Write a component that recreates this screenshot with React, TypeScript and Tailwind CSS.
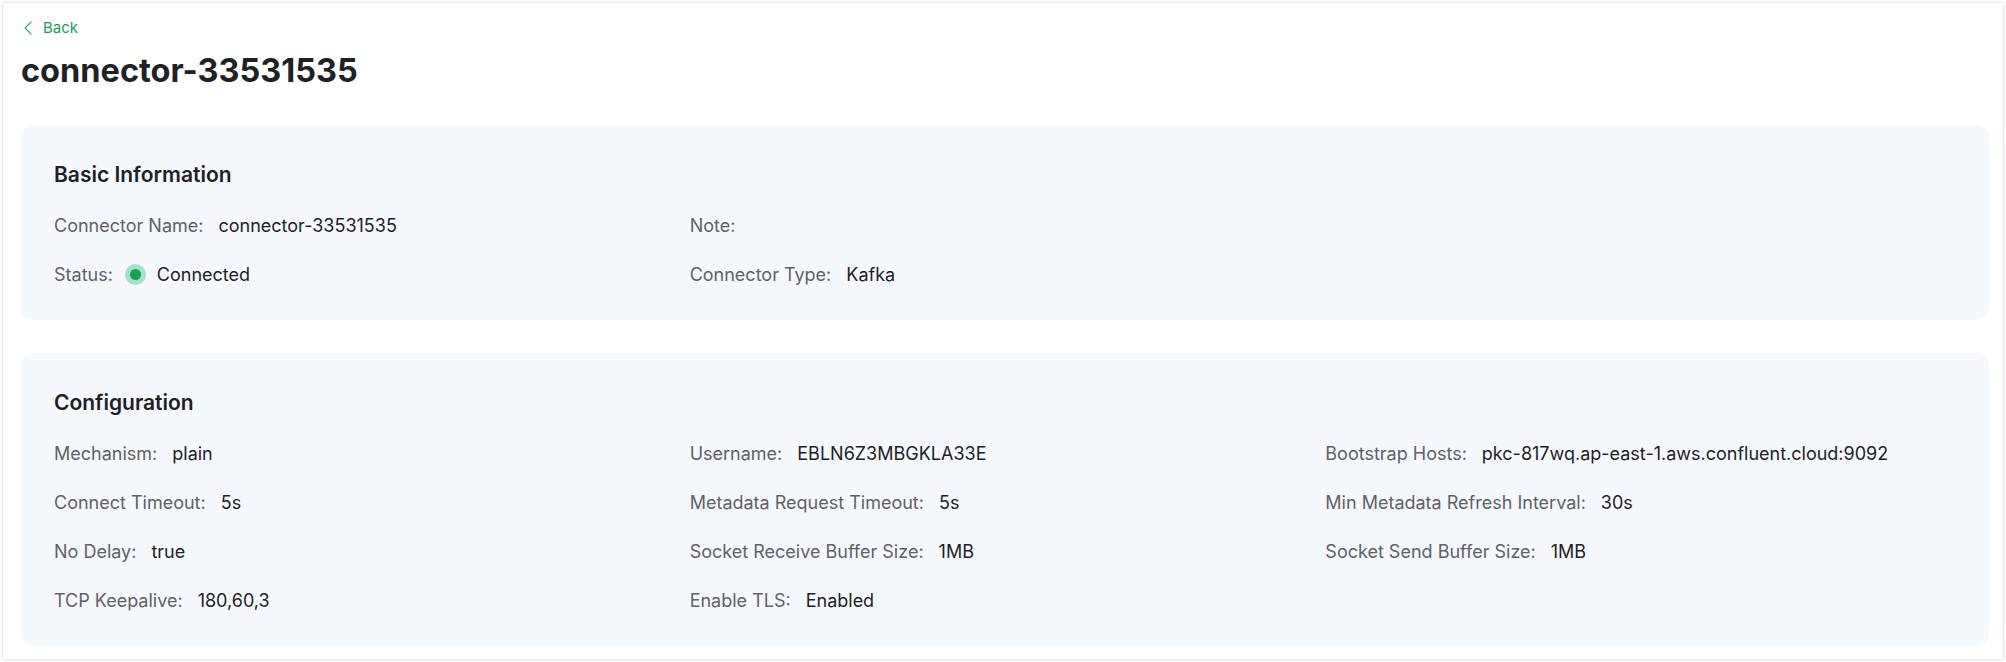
import { ChevronLeft } from 'lucide-react';

interface Field {
  label: string;
  value?: string;
  status?: boolean;
}

const BASIC: Field[] = [
  { label: 'Connector Name:', value: 'connector-33531535' },
  { label: 'Note:' },
  { label: '' },
  { label: 'Status:', value: 'Connected', status: true },
  { label: 'Connector Type:', value: 'Kafka' },
];

const CONFIG: Field[] = [
  { label: 'Mechanism:', value: 'plain' },
  { label: 'Username:', value: 'EBLN6Z3MBGKLA33E' },
  { label: 'Bootstrap Hosts:', value: 'pkc-817wq.ap-east-1.aws.confluent.cloud:9092' },
  { label: 'Connect Timeout:', value: '5s' },
  { label: 'Metadata Request Timeout:', value: '5s' },
  { label: 'Min Metadata Refresh Interval:', value: '30s' },
  { label: 'No Delay:', value: 'true' },
  { label: 'Socket Receive Buffer Size:', value: '1MB' },
  { label: 'Socket Send Buffer Size:', value: '1MB' },
  { label: 'TCP Keepalive:', value: '180,60,3' },
  { label: 'Enable TLS:', value: 'Enabled' },
];

function Section({ title, fields }: { title: string; fields: Field[] }) {
  return (
    <div className="bg-[#f5f8fd] rounded-xl pt-[36px] pb-[21px] pl-[33px] pr-[28px]">
      <h2 className="text-[21px] leading-[28px] font-semibold text-[#1f2225] mb-[12px]">{title}</h2>
      <div className="grid grid-cols-3 auto-rows-[49px]">
        {fields.map((f, i) => (
          <div key={i} className="flex items-center text-[18px] leading-[25px]">
            {f.label && <span className="text-[#5f6266]">{f.label}</span>}
            {f.status && (
              <span className="ml-[12px] w-[21px] h-[21px] rounded-full bg-[#a3e2c6] flex items-center justify-center">
                <span className="w-[11px] h-[11px] rounded-full bg-[#18a058]" />
              </span>
            )}
            {f.value && (
              <span className={`text-[#1f2225] ${f.status ? 'ml-[11px]' : 'ml-[15px]'}`}>{f.value}</span>
            )}
          </div>
        ))}
      </div>
    </div>
  );
}

export default function App() {
  return (
    <div className="p-[3px] bg-white font-['Inter','Noto_Sans',sans-serif]">
      <div className="bg-white shadow-[0_0_3px_rgba(0,0,0,0.22)] pt-[15px] pb-[13px] pl-[18px] pr-[14px]">

        {/* Back link */}
        <button className="flex items-center h-[20px] text-[15px] text-[#18a058]">
          <ChevronLeft className="w-6 h-6 -my-[2px] -ml-[5px] text-[#36ad6a]" strokeWidth={1.2} />
          <span className="ml-[3px]">Back</span>
        </button>

        {/* Title */}
        <h1 className="mt-[13px] mb-[34px] text-[32.5px] leading-[40px] font-bold text-[#1f2225]">
          connector-33531535
        </h1>

        <div className="space-y-[33px]">
          <Section title="Basic Information" fields={BASIC} />
          <Section title="Configuration" fields={CONFIG} />
        </div>
      </div>
    </div>
  );
}
